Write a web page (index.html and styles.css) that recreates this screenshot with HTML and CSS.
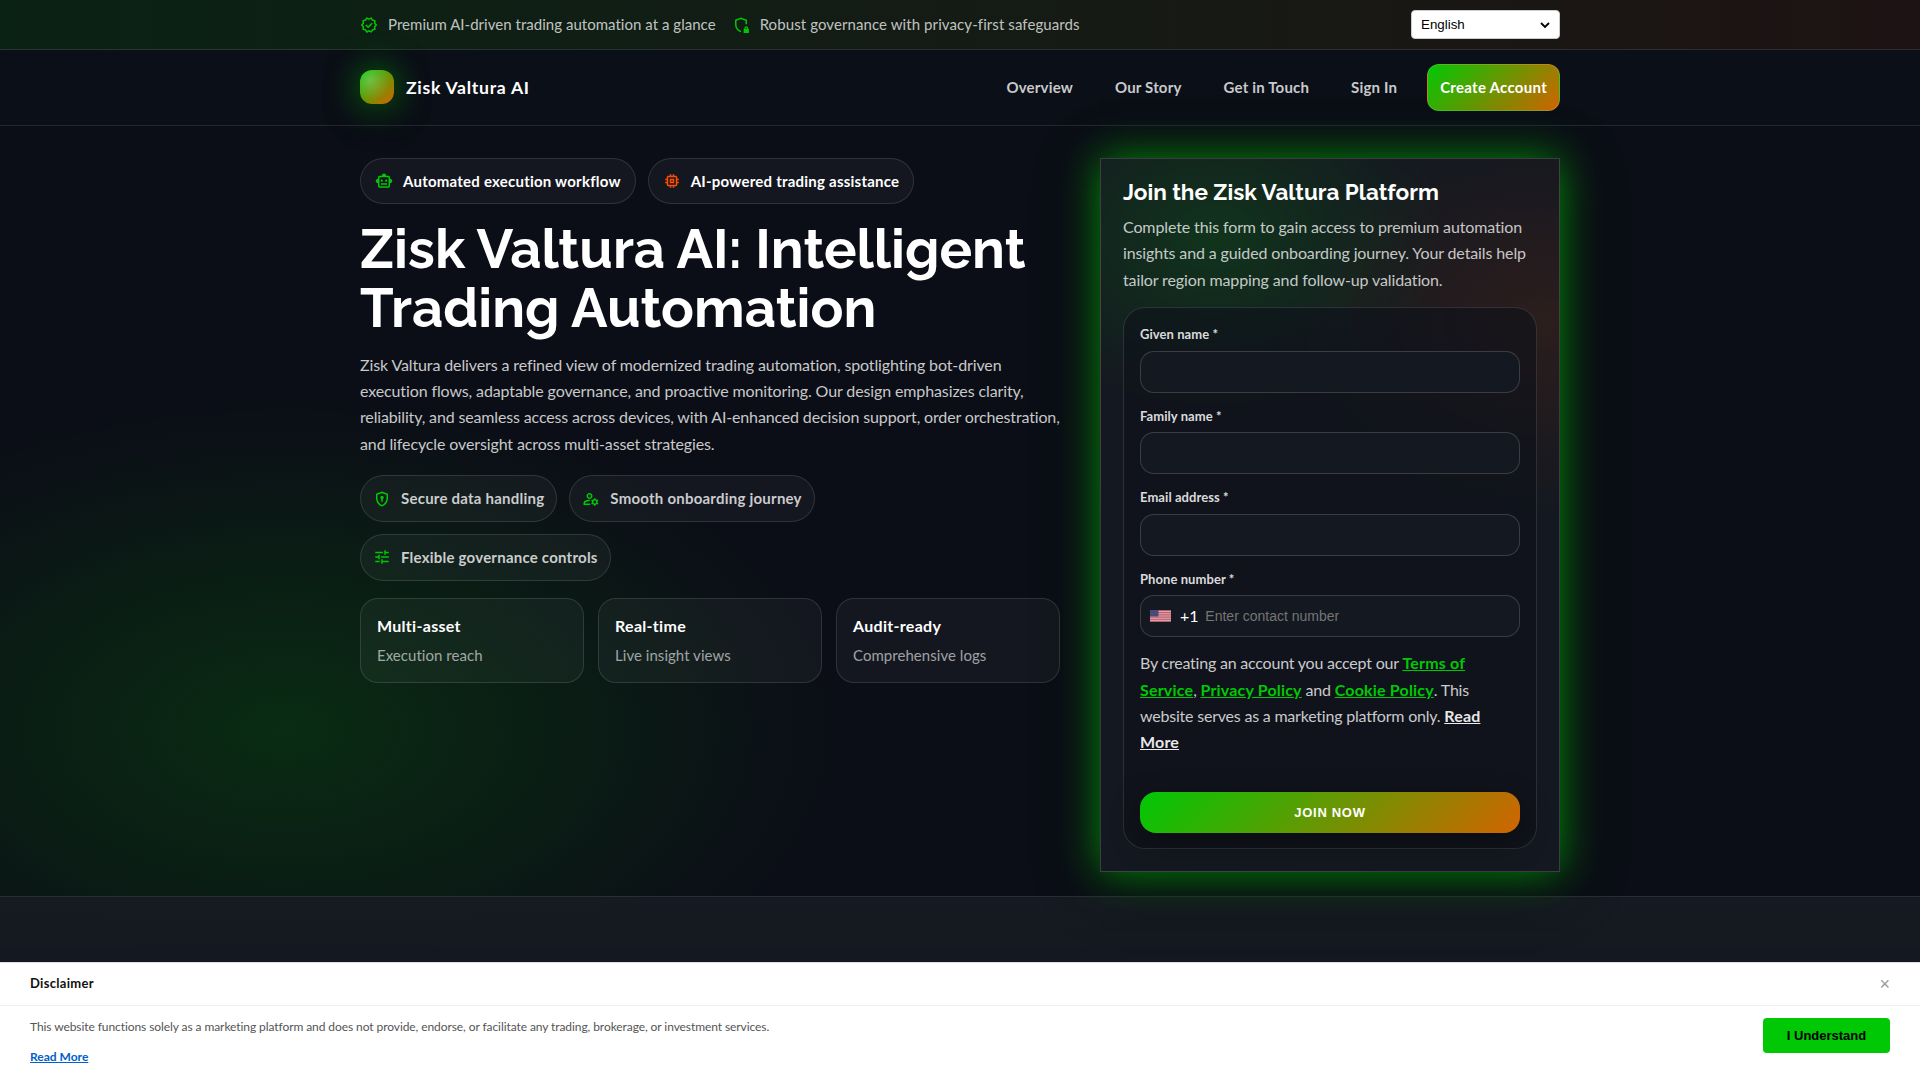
FILE: index.html
```html
<!DOCTYPE html>
<html lang="en">
<head>
  <meta charset="UTF-8">
  <meta name="viewport" content="width=device-width, initial-scale=1.0">
  <title>Zisk Valtura AI</title>
  <link rel="stylesheet" href="styles.css">
</head>
<body>
  <div class="topbar">
    <div class="container topbar-inner">
      <div class="topbar-notes">
        <span class="note">
          <svg class="icon" viewBox="0 0 24 24"><path d="m23 12-2.44-2.79.34-3.69-3.61-.82-1.89-3.2L12 2.96 8.6 1.5 6.71 4.69 3.1 5.5l.34 3.7L1 12l2.44 2.79-.34 3.7 3.61.82L8.6 22.5l3.4-1.47 3.4 1.46 1.89-3.19 3.61-.82-.34-3.69L23 12zm-4.51 2.11.26 2.79-2.74.62-1.43 2.41L12 18.82l-2.58 1.11-1.43-2.41-2.74-.62.26-2.8L3.66 12l1.85-2.12-.26-2.78 2.74-.61 1.43-2.41L12 5.18l2.58-1.11 1.43 2.41 2.74.62-.26 2.79L20.34 12l-1.85 2.11z"/><path class="line" d="M7.8 12l3.1 3 5.3-5.3"/></svg>
          Premium AI-driven trading automation at a glance
        </span>
        <span class="note note-safe">
          <svg class="icon" viewBox="0 0 24 24"><path class="line" d="M19 11V5.7L12 3.1 5 5.7V11c0 4.5 2.9 8.4 7 9.8"/><path d="M21.5 17v-.8a2.5 2.5 0 0 0-5 0v.8h-1v5.500h7V17zM18 17v-.8a1 1 0 0 1 2 0v.8z"/></svg>
          Robust governance with privacy-first safeguards
        </span>
      </div>
      <div class="lang">
        <select class="lang-select" aria-label="Language">
          <option>English</option>
        </select>
        <svg class="lang-arrow" viewBox="0 0 10 7"><path d="M1 1l4 4 4-4"/></svg>
      </div>
    </div>
  </div>

  <header class="header">
    <div class="container header-inner">
      <a class="brand" href="#"><span class="brand-mark"></span>Zisk Valtura AI</a>
      <div class="header-right">
        <nav class="nav">
          <a href="#">Overview</a>
          <a href="#">Our Story</a>
          <a href="#">Get in Touch</a>
          <a href="#">Sign In</a>
        </nav>
        <a class="nav-cta" href="#">Create Account</a>
      </div>
    </div>
  </header>

  <section class="hero">
    <div class="container hero-grid">
      <div class="hero-copy">
        <div class="badges">
          <span class="badge">
            <svg class="icon" viewBox="0 0 24 24"><path d="M20 9V7c0-1.100-.9-2-2-2h-3c0-1.660-1.340-3-3-3S9 3.340 9 5H6c-1.100 0-2 .9-2 2v2c-1.660 0-3 1.340-3 3s1.340 3 3 3v4c0 1.100.9 2 2 2h12c1.100 0 2-.9 2-2v-4c1.660 0 3-1.340 3-3s-1.340-3-3-3zm-2 10H6V7h12v12zm-9-6c-.83 0-1.500-.67-1.500-1.500S8.170 10 9 10s1.500.67 1.500 1.500S9.830 13 9 13zm7.500-1.500c0 .83-.67 1.500-1.500 1.500s-1.500-.67-1.500-1.500.67-1.500 1.500-1.500 1.500.67 1.500 1.500zM8 15h8v2H8v-2z"/></svg>
            Automated execution workflow
          </span>
          <span class="badge">
            <svg class="icon icon-warm" viewBox="0 0 24 24"><path d="M15 9H9v6h6V9zm-2 4h-2v-2h2v2zm8-2V9h-2V7c0-1.100-.9-2-2-2h-2V3h-2v2h-2V3H9v2H7c-1.100 0-2 .9-2 2v2H3v2h2v2H3v2h2v2c0 1.100.9 2 2 2h2v2h2v-2h2v2h2v-2h2c1.100 0 2-.9 2-2v-2h2v-2h-2v-2h2zm-4 6H7V7h10v10z"/></svg>
            AI-powered trading assistance
          </span>
        </div>

        <h1>Zisk Valtura AI: Intelligent Trading Automation</h1>
        <p class="lead">Zisk Valtura delivers a refined view of modernized trading automation, spotlighting bot-driven execution flows, adaptable governance, and proactive monitoring. Our design emphasizes clarity, <span class="tight">reliability, and seamless access across devices, with AI-enhanced decision support, order orchestration,</span> and lifecycle oversight across multi-asset strategies.</p>

        <div class="features">
          <span class="feature">
            <svg class="icon" viewBox="0 0 24 24"><path d="M12 2 4 5v6.090c0 5.050 3.410 9.760 8 10.910 4.590-1.150 8-5.860 8-10.910V5l-8-3zm6 9.090c0 4-2.550 7.700-6 8.830-3.450-1.130-6-4.820-6-8.830V6.310l6-2.120 6 2.120v4.780z"/><circle cx="12" cy="10" r="2.200"/><path d="M11 11h2v4.500h-2z"/></svg>
            Secure data handling
          </span>
          <span class="feature">
            <svg class="icon" viewBox="0 0 24 24"><path d="M4 18v-.65c0-.34.16-.66.41-.81C6.100 15.530 8.030 15 10 15c.03 0 .05 0 .08.01.1-.7.3-1.370.59-1.980-.22-.02-.44-.03-.67-.03-2.420 0-4.680.67-6.610 1.820-.88.52-1.390 1.500-1.390 2.530V20h9.260c-.42-.6-.75-1.280-.97-2H4zM10 12c2.210 0 4-1.790 4-4s-1.790-4-4-4-4 1.790-4 4 1.790 4 4 4zm0-6c1.100 0 2 .9 2 2s-.9 2-2 2-2-.9-2-2 .9-2 2-2zM20.750 16c0-.22-.03-.42-.06-.63l1.140-1.010-1-1.730-1.450.49c-.32-.27-.68-.48-1.080-.63L18 11h-2l-.3 1.490c-.4.15-.76.36-1.080.63l-1.450-.49-1 1.730 1.140 1.010c-.03.21-.06.41-.06.63s.03.42.06.63l-1.140 1.010 1 1.730 1.450-.49c.32.27.68.48 1.080.63L16 21h2l.3-1.490c.4-.15.76-.36 1.080-.63l1.450.49 1-1.730-1.140-1.010c.03-.21.06-.41.06-.63zM17 18c-1.100 0-2-.9-2-2s.9-2 2-2 2 .9 2 2-.9 2-2 2z"/></svg>
            Smooth onboarding journey
          </span>
          <span class="feature">
            <svg class="icon" viewBox="0 0 24 24"><path d="M3 17v2h6v-2H3zM3 5v2h10V5H3zm10 16v-2h8v-2h-8v-2h-2v6h2zM7 9v2H3v2h4v2h2V9H7zm14 4v-2H11v2h10zm-6-4h2V7h4V5h-4V3h-2v6z"/></svg>
            Flexible governance controls
          </span>
        </div>

        <div class="stats">
          <div class="stat"><strong>Multi-asset</strong><span>Execution reach</span></div>
          <div class="stat"><strong>Real-time</strong><span>Live insight views</span></div>
          <div class="stat"><strong>Audit-ready</strong><span>Comprehensive logs</span></div>
        </div>
      </div>

      <aside class="signup">
        <h2>Join the Zisk Valtura Platform</h2>
        <p class="signup-text">Complete this form to gain access to premium automation insights and a guided onboarding journey. Your details help tailor region mapping and follow-up validation.</p>
        <form class="form">
          <div class="field">
            <label for="fname">Given name *</label>
            <input type="text" id="fname" name="fname">
          </div>
          <div class="field">
            <label for="lname">Family name *</label>
            <input type="text" id="lname" name="lname">
          </div>
          <div class="field">
            <label for="email">Email address *</label>
            <input type="email" id="email" name="email">
          </div>
          <div class="field">
            <label for="phone">Phone number *</label>
            <div class="phone">
              <svg class="flag" viewBox="0 0 21 12">
                <rect width="21" height="12" fill="#f3d5da"/>
                <path d="M0 .5h21M0 2.400h21M0 4.200h21M0 6h21M0 7.800h21M0 9.700h21M0 11.500h21" stroke="#e0606f" stroke-width="1"/>
                <rect width="8.500" height="6.500" fill="#55548c"/>
              </svg>
              <span class="code">+1</span>
              <input type="tel" id="phone" name="phone" placeholder="Enter contact number">
            </div>
          </div>
          <p class="terms">By creating an account you accept our <a href="#">Terms of Service</a>, <a href="#">Privacy Policy</a> and <a href="#">Cookie Policy</a>. This website serves as a marketing platform only. <a class="more" href="#">Read More</a></p>
          <button type="submit" class="submit">JOIN NOW</button>
        </form>
      </aside>
    </div>
  </section>

  <section class="next-section"></section>

  <div class="disclaimer">
    <div class="disclaimer-head">
      <span>Disclaimer</span>
      <button type="button" class="close" aria-label="Close">×</button>
    </div>
    <div class="disclaimer-body">
      <div class="disclaimer-text">
        <p>This website functions solely as a marketing platform and does not provide, endorse, or facilitate any trading, brokerage, or investment services.</p>
        <a href="#">Read More</a>
      </div>
      <button type="button" class="accept">I Understand</button>
    </div>
  </div>
</body>
</html>
```
FILE: styles.css
```css
* {
  box-sizing: border-box;
}
html {
  background: #0b0e16;
}
body {
  margin: 0;
  height: 1080px;
  overflow: hidden;
  font-family: Lato, sans-serif;
  font-size: 16px;
  line-height: 1.65;
  letter-spacing: -0.12px;
  color: #fff;
  background: radial-gradient(550px 325px at 285px 730px, rgba(0, 200, 0, 0.16), transparent 100%), #0b0e16;
}
h1, h2, p {
  margin: 0;
}
a {
  color: inherit;
  text-decoration: none;
}
.container {
  width: 1200px;
  margin: 0 auto;
}
.icon {
  width: 18px;
  height: 18px;
  flex: none;
  fill: #00c805;
}
.icon .line {
  fill: none;
  stroke: #00c805;
  stroke-width: 2;
}
.icon-warm {
  fill: #ff4d00;
}

/* top bar */
.topbar {
  height: 50px;
  border-bottom: 1px solid rgba(255, 255, 255, 0.1);
  background: linear-gradient(90deg, rgba(0, 200, 5, 0.11), rgba(255, 77, 0, 0.08));
}
.topbar-inner {
  height: 49px;
  display: flex;
  align-items: center;
  justify-content: space-between;
}
.topbar-notes {
  display: flex;
  gap: 16px;
}
.note {
  display: flex;
  align-items: center;
  gap: 10px;
  font-size: 15px;
  letter-spacing: 0.03px;
  color: rgba(255, 255, 255, 0.74);
}
.note-safe {
  letter-spacing: 0.09px;
}
.lang {
  position: relative;
  display: flex;
}
.lang-select {
  width: 149px;
  height: 29px;
  padding: 4px 9px;
  border: 1px solid #ccc;
  border-radius: 4px;
  appearance: none;
  background-color: #fff;
  color: #000;
  font: 13.333px "Liberation Sans", sans-serif;
}
.lang-arrow {
  position: absolute;
  right: 10px;
  top: 12px;
  width: 10px;
  height: 7px;
  fill: none;
  stroke: #000;
  stroke-width: 1.8;
  pointer-events: none;
}

/* header */
.header {
  height: 76px;
  border-bottom: 1px solid rgba(255, 255, 255, 0.1);
  background: rgba(13, 17, 26, 0.4);
}
.header-inner {
  height: 75px;
  display: flex;
  align-items: center;
  justify-content: space-between;
}
.brand {
  display: flex;
  align-items: center;
  gap: 12px;
  font-size: 17.6px;
  font-weight: 700;
  letter-spacing: 0.72px;
}
.brand-mark {
  width: 34px;
  height: 34px;
  margin-bottom: 2px;
  border-radius: 12px;
  background: radial-gradient(circle at 30% 30%, rgba(255, 255, 255, 0.25), transparent 60%), linear-gradient(135deg, #00c805, #d26400);
  box-shadow: 0 0 34px rgba(0, 200, 5, 0.6), 0 10px 40px rgba(0, 0, 0, 0.3);
}
.header-right {
  display: flex;
  align-items: center;
  gap: 17px;
}
.nav {
  display: flex;
  gap: 16px;
}
.nav a {
  padding: 0 13px;
  font-size: 15px;
  font-weight: 700;
  letter-spacing: 0.18px;
  color: rgba(255, 255, 255, 0.78);
}
.nav-cta {
  padding: 10px 12px;
  border: 1px solid rgba(255, 255, 255, 0.14);
  border-radius: 12px;
  background: linear-gradient(135deg, #00c805, #d26400);
  font-size: 15px;
  font-weight: 700;
  letter-spacing: 0.28px;
}

/* hero */
.hero {
  padding: 32px 0 24px;
}
.hero-grid {
  display: grid;
  grid-template-columns: 700px 460px;
  gap: 40px;
}
.badges,
.features {
  display: flex;
  flex-wrap: wrap;
  gap: 12px;
}
.badge,
.feature {
  display: flex;
  align-items: center;
  gap: 10px;
  padding: 10px 14px;
  border: 1px solid rgba(255, 255, 255, 0.12);
  border-radius: 24px;
  background: rgba(255, 255, 255, 0.04);
  font-size: 15px;
  font-weight: 700;
  letter-spacing: 0.23px;
}
.badge {
  line-height: 24px;
}
.feature {
  padding: 10px 12px;
  color: rgba(255, 255, 255, 0.78);
}
h1 {
  margin: 16px 0 13px;
  font-family: Raleway, Lato, sans-serif;
  font-size: 54.4px;
  font-weight: 700;
  line-height: 59.3px;
  letter-spacing: 0.02px;
}
.lead {
  margin-bottom: 18px;
  color: rgba(255, 255, 255, 0.78);
}
.lead .tight {
  letter-spacing: -0.15px;
  white-space: nowrap;
}
.stats {
  display: grid;
  grid-template-columns: repeat(3, 1fr);
  gap: 14px;
  margin-top: 17px;
}
.stat {
  padding: 14px 16px;
  border: 1px solid rgba(255, 255, 255, 0.12);
  border-radius: 18px;
  background: rgba(255, 255, 255, 0.04);
}
.stat strong,
.stat span {
  display: block;
}
.stat strong {
  letter-spacing: 0.3px;
}
.stat span {
  margin-top: 4px;
  font-size: 15px;
  letter-spacing: 0.04px;
  color: rgba(255, 255, 255, 0.6);
}

/* sign up card */
.signup {
  height: 714px;
  padding: 15px 22px 22px;
  border: 1px solid rgba(255, 255, 255, 0.16);
  background:
    radial-gradient(230px 170px at 25% 11%, rgba(0, 200, 5, 0.16), transparent 100%),
    radial-gradient(240px 190px at 96% 23%, rgba(255, 77, 0, 0.1), transparent 100%),
    #141820;
  box-shadow: 0 0 40px rgba(0, 200, 5, 0.7), 0 10px 60px rgba(0, 0, 0, 0.4);
}
.signup h2 {
  font-family: Raleway, Lato, sans-serif;
  font-size: 22.5px;
  font-weight: 700;
  line-height: 37px;
  letter-spacing: 0;
}
.signup-text {
  margin: 3px 0 14px;
  color: rgba(255, 255, 255, 0.76);
}
.form {
  height: 542px;
  padding: 16px 16px 16px;
  border: 1px solid rgba(255, 255, 255, 0.12);
  border-radius: 22px;
  background: rgba(13, 16, 25, 0.6);
}
.field {
  margin-bottom: 13px;
}
.field label {
  display: block;
  margin-bottom: 5px;
  font-size: 13px;
  font-weight: 700;
  line-height: 21.5px;
  letter-spacing: 0.07px;
  color: rgba(255, 255, 255, 0.86);
}
.field > input,
.phone {
  display: flex;
  align-items: center;
  width: 100%;
  height: 42px;
  border: 1px solid rgba(255, 255, 255, 0.16);
  border-radius: 14px;
  background: #141820;
  color: #fff;
}
.phone {
  padding-left: 9px;
}
.flag {
  width: 21px;
  height: 12px;
  opacity: 0.85;
}
.code {
  margin: 0 7px 0 9px;
}
.phone input {
  flex: 1;
  min-width: 0;
  padding: 0;
  border: 0;
  outline: 0;
  background: none;
  color: #fff;
  font: 14px "Liberation Sans", sans-serif;
}
.phone input::placeholder {
  color: #757575;
}
.terms {
  letter-spacing: -0.21px;
  color: rgba(255, 255, 255, 0.78);
}
.terms a {
  color: #00c805;
  font-weight: 700;
  letter-spacing: 0.18px;
  text-decoration: underline;
}
.terms .more {
  color: rgba(255, 255, 255, 0.92);
}
.submit {
  display: block;
  width: 100%;
  height: 41px;
  margin-top: 36px;
  border: 0;
  border-radius: 16px;
  background: linear-gradient(135deg, #00c805, #d26400);
  box-shadow: 0 10px 30px rgba(0, 0, 0, 0.35);
  color: #fff;
  font: 700 13px "Liberation Sans", sans-serif;
  letter-spacing: 0.7px;
}

.next-section {
  height: 184px;
  border-top: 1px solid rgba(255, 255, 255, 0.1);
  background: linear-gradient(180deg, rgba(23, 27, 35, 0.92), #12161e 120px);
}

/* disclaimer bar */
.disclaimer {
  position: fixed;
  left: 0;
  right: 0;
  bottom: 0;
  height: 118px;
  border-top: 1px solid #ddd;
  background: #fff;
  color: #555;
}
.disclaimer-head {
  height: 43px;
  padding: 0 30px;
  display: flex;
  align-items: center;
  justify-content: space-between;
  border-bottom: 1px solid #eee;
  font-size: 13px;
  font-weight: 700;
  letter-spacing: 0.3px;
  color: #111;
}
.close {
  padding: 0;
  border: 0;
  background: none;
  color: #999;
  font: 18px "Liberation Sans", sans-serif;
}
.disclaimer-body {
  display: flex;
  justify-content: space-between;
  padding: 12px 30px;
  font-size: 12px;
  letter-spacing: -0.08px;
}
.disclaimer-text {
  margin-top: -1px;
}
.disclaimer-body p {
  margin-bottom: 10px;
}
.disclaimer-body a {
  color: #0060cc;
  font-weight: 700;
  letter-spacing: 0;
  text-decoration: underline;
}
.accept {
  width: 127px;
  height: 35px;
  border: 0;
  border-radius: 4px;
  background: #00c805;
  color: #000;
  font: 700 13px "Liberation Sans", sans-serif;
}
```
